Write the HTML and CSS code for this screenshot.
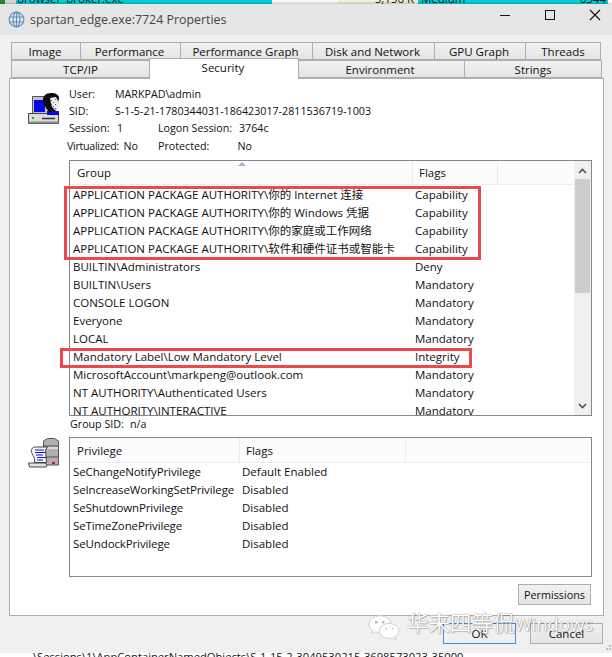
FILE: index.html
```html
<!DOCTYPE html>
<html lang="en">
<head>
<meta charset="utf-8">
<title>spartan_edge.exe:7724 Properties</title>
<link rel="stylesheet" href="styles.css">
</head>
<body>
<div class="screen">
  <div class="behind-top">
    <span class="bt-a"></span>
    <span class="bt-b"><span class="bt-name">browser_broker.exe</span></span>
    <span class="bt-c"></span>
    <span class="bt-d"><span>5,156 K</span></span>
    <span class="bt-e"><span>Medium</span><span>6544</span></span>
  </div>
  <div class="window">
    <div class="titlebar">
      <svg class="globe" width="17" height="17" viewBox="0 0 17 17" fill="none" stroke="#5b8fc4" stroke-width="1.1"><circle cx="8.5" cy="8.5" r="7.4"/><ellipse cx="8.5" cy="8.5" rx="3.4" ry="7.4"/><path d="M1.2 6h14.600M1.200 11h14.600M8.500 1v15"/></svg>
      <span class="title">spartan_edge.exe:7724 Properties</span>
      <span class="winbtns">
        <svg width="12" height="12" viewBox="0 0 12 12"><path d="M1 6.500h10" stroke="#111" stroke-width="1"/></svg>
        <svg width="12" height="12" viewBox="0 0 12 12"><rect x="1.500" y="1.500" width="9" height="9" fill="none" stroke="#111"/></svg>
        <svg width="12" height="12" viewBox="0 0 12 12"><path d="M1 1l10 10M11 1L1 11" stroke="#111" stroke-width="1.100"/></svg>
      </span>
    </div>
    <div class="tabs">
      <div class="tabrow first">
        <span class="tab w-image">Image</span>
        <span class="tab w-perf">Performance</span>
        <span class="tab w-graph">Performance Graph</span>
        <span class="tab w-disk">Disk and Network</span>
        <span class="tab w-gpu">GPU Graph</span>
        <span class="tab w-threads">Threads</span>
      </div>
      <div class="tabrow second">
        <span class="tab w-tcp">TCP/IP</span>
        <span class="tab active w-sec">Security</span>
        <span class="tab w-env">Environment</span>
        <span class="tab w-str">Strings</span>
      </div>
    </div>
    <div class="panel">
      <div class="info">
        <svg class="icon-user" width="32" height="32" viewBox="0 0 32 32">
          <path d="M4.500 3.500h18v17h-18z" fill="#c4c4c4" stroke="#555"/>
          <path d="M6 7h11v12H6z" fill="#0808e8"/>
          <path d="M.5 20.500h30v10H.5z" fill="#dcdcdc" stroke="#444"/>
          <path d="M.5 28.500h30v2H.5z" fill="#8a8a8a"/>
          <path d="M19 18h12v4H19z" fill="#0808e8"/>
          <path d="M4 24h2v2H4z" fill="#00c000"/>
          <path d="M14 25.500h13" stroke="#333" stroke-width="1.500"/>
          <path d="M15 9c-1-6 3-9 8-9 5 0 8 2 8 5l-2 11-3 3h-5l-3-4z" fill="#0c0c0c"/>
          <path d="M22 5l6-1 2 4 2 4-2 1v3l-3 1-3-3-1-4z" fill="#ececec"/>
          <path d="M23 7h1v1h-1zM25 9h1v1h-1zM23 11h1v1h-1zM27 6h1v1h-1zM27 11h1v1h-1zM25 13h1v1h-1zM27 15h1v1h-1z" fill="#666"/>
        </svg>
        <div class="facts">
          <div class="fact"><span class="k-user">User:</span><span>MARKPAD\admin</span></div>
          <div class="fact"><span class="k-user">SID:</span><span>S-1-5-21-1780344031-186423017-2811536719-1003</span></div>
          <div class="fact"><span class="k-sess">Session:</span><span class="v-sess">1</span><span class="k-logon">Logon Session:</span><span>3764c</span></div>
          <div class="fact"><span class="k-virt">Virtualized:</span><span class="v-virt">No</span><span class="k-prot">Protected:</span><span>No</span></div>
        </div>
      </div>
      <div class="listbox groups">
        <div class="listhead">
          <span class="hcell c-group">Group<i class="sort"></i></span>
          <span class="hcell c-flags">Flags</span>
          <span class="hcell c-rest"></span>
        </div>
        <div class="rows">
          <div class="row"><span class="c-group">APPLICATION PACKAGE AUTHORITY\你的 Internet 连接</span><span>Capability</span></div>
          <div class="row"><span class="c-group">APPLICATION PACKAGE AUTHORITY\你的 Windows 凭据</span><span>Capability</span></div>
          <div class="row"><span class="c-group">APPLICATION PACKAGE AUTHORITY\你的家庭或工作网络</span><span>Capability</span></div>
          <div class="row"><span class="c-group">APPLICATION PACKAGE AUTHORITY\软件和硬件证书或智能卡</span><span>Capability</span></div>
          <div class="row"><span class="c-group">BUILTIN\Administrators</span><span>Deny</span></div>
          <div class="row"><span class="c-group">BUILTIN\Users</span><span>Mandatory</span></div>
          <div class="row"><span class="c-group">CONSOLE LOGON</span><span>Mandatory</span></div>
          <div class="row"><span class="c-group">Everyone</span><span>Mandatory</span></div>
          <div class="row"><span class="c-group">LOCAL</span><span>Mandatory</span></div>
          <div class="row"><span class="c-group">Mandatory Label\Low Mandatory Level</span><span>Integrity</span></div>
          <div class="row"><span class="c-group">MicrosoftAccount\markpeng@outlook.com</span><span>Mandatory</span></div>
          <div class="row"><span class="c-group">NT AUTHORITY\Authenticated Users</span><span>Mandatory</span></div>
          <div class="row"><span class="c-group">NT AUTHORITY\INTERACTIVE</span><span>Mandatory</span></div>
        </div>
        <div class="scrollbar">
          <svg class="arrow" width="9" height="6" viewBox="0 0 9 6"><path d="M1 5l3.500-3.500L8 5" fill="none" stroke="#505050" stroke-width="1.600"/></svg>
          <div class="thumb"></div>
          <svg class="arrow down" width="9" height="6" viewBox="0 0 9 6"><path d="M1 1l3.500 3.500L8 1" fill="none" stroke="#505050" stroke-width="1.600"/></svg>
        </div>
      </div>
      <div class="groupsid"><span class="k-gsid">Group SID:</span><span>n/a</span></div>
      <div class="privs">
        <svg class="icon-priv" width="32" height="30" viewBox="0 0 32 30">
          <path d="M15.500 3l4-2.500h7l4 2.500v24h-15z" fill="#b0b0b0" stroke="#555"/>
          <path d="M16 8h14M16 19h14" stroke="#555"/>
          <path d="M16 9h14v2H16z" fill="#dedede"/>
          <path d="M24 24h3v2h-3z" fill="#e01010"/>
          <path d="M3.500 11.500c1-2 2-2.500 4-2.500h12l-2 3c0 4 1 8 1 12.500H6.500c1-4-1-6-2.500-9-.5-1.500-1-3-.5-4z" fill="#f6f6f6" stroke="#444"/>
          <path d="M7 12h9M7 14.500h10M8 17h7M9 19.500h9M9 22h6" stroke="#1010d8" stroke-width="1.200"/>
          <path d="M.5 25h17l1.500 2-1 2H1.500z" fill="#e2e2e2" stroke="#444"/>
        </svg>
        <div class="listbox privbox">
          <div class="listhead tall">
            <span class="hcell c-priv">Privilege</span>
            <span class="hcell c-pflags">Flags</span>
            <span class="hcell c-rest"></span>
          </div>
          <div class="rows">
            <div class="row"><span class="c-priv">SeChangeNotifyPrivilege</span><span>Default Enabled</span></div>
            <div class="row"><span class="c-priv">SeIncreaseWorkingSetPrivilege</span><span>Disabled</span></div>
            <div class="row"><span class="c-priv">SeShutdownPrivilege</span><span>Disabled</span></div>
            <div class="row"><span class="c-priv">SeTimeZonePrivilege</span><span>Disabled</span></div>
            <div class="row"><span class="c-priv">SeUndockPrivilege</span><span>Disabled</span></div>
          </div>
        </div>
      </div>
      <div class="permrow"><button class="btn perm" type="button">Permissions</button></div>
    </div>
    <div class="footer">
      <button class="btn ok" type="button">OK</button>
      <button class="btn cancel" type="button">Cancel</button>
    </div>
  </div>
  <div class="behind-bottom">\Sessions\1\AppContainerNamedObjects\S-1-15-2-3049530215-3698573023-35000</div>
  <div class="mark mark-a"></div>
  <div class="mark mark-b"></div>
  <svg class="grip" width="6" height="6" viewBox="0 0 6 6" fill="#b8b8b8"><path d="M3 0h2v2H3zM0 3h2v2H0zM3 3h2v2H3z"/></svg>
  <div class="watermark">
    <svg class="wm-icon" width="32" height="25" viewBox="0 0 32 25">
      <path d="M12 .8C5.800.8 1 4.700 1 9.300c0 2.600 1.500 4.900 3.800 6.300l-1 3.200 3.700-2c1.400.4 2.800.6 4.500.6 6.200 0 11-3.700 11-8.100C23 4.700 18.200.8 12 .8z" fill="#fff" stroke="#d0d0d0"/>
      <path d="M21 8.500c-5.300 0-9.800 3.300-9.800 7.500s4.500 7.500 9.800 7.500c1.300 0 2.500-.2 3.600-.6l3.200 1.700-.9-3c2.400-1.400 4-3.300 4-5.600 0-4.200-4.600-7.500-9.900-7.500z" fill="#fff" stroke="#d0d0d0"/>
      <path d="M7 6h2.500v2.500H7zM14 6h2.500v2.500H14zM17.500 13H19v1.500h-1.500zM24 13h1.500v1.500H24z" fill="#bdbdbd"/>
    </svg>
    <span class="wm-text">华来四等侃<span class="wm-latin">Windows</span></span>
  </div>
</div>
</body>
</html>
```

FILE: styles.css
```css
* { box-sizing: border-box; }
html, body { margin: 0; padding: 0; }
body { font-family: "Open Sans", "Noto Sans CJK SC", sans-serif; font-size: 11.5px; color: #111; background: #fff; }
.screen { position: relative; width: 612px; height: 657px; overflow: hidden; display: flex; flex-direction: column; }

.behind-top { height: 4px; display: flex; line-height: 12px; overflow: hidden; flex: none; background: #fff; }
.behind-top > span > span { display: block; margin-top: -7px; }
.bt-a { width: 16px; background: #d8d8d8; border-left: 5px solid #2a8a2a; }
.bt-b { width: 256px; background: #00d2d8; }
.bt-name { padding-left: 1px; }
.bt-c { width: 66px; background: #fafafa; }
.bt-d { width: 80px; background: #f4efdc; text-align: right; padding-right: 4px; }
.bt-e { width: 190px; background: #00d2d8; display: flex; justify-content: space-between; padding: 0 2px 0 3px; }

.window { flex: 1; min-height: 0; background: #f0f0f0; display: flex; flex-direction: column; box-shadow: 0 0 3px rgba(0,0,0,.4); }
.titlebar { height: 31px; background: #e6e6e6; display: flex; align-items: center; padding: 0 11px 0 8px; flex: none; }
.globe { margin-right: 5px; }
.title { font-size: 12.400px; color: #444; flex: 1; }
.winbtns { display: flex; gap: 33px; margin-top: -9px; }

.tabs { padding: 7px 9px 0 11px; flex: none; height: 44px; }
.tabrow { display: flex; height: 18px; }
.tab { display: flex; align-items: center; justify-content: center; height: 18px; border: 1px solid #adadad; background: linear-gradient(#f2f2f2, #e4e4e4); white-space: nowrap; margin-left: -1px; }
.tab:first-child { margin-left: 0; }
.first .tab { padding-right: 2px; }
.first .w-threads { padding-right: 0; }
.tab.active { background: #fff; height: 21px; margin-top: -2px; border-bottom: 0; position: relative; z-index: 2; align-items: flex-start; padding-top: 1px; }
.w-image { width: 70px; }
.w-perf { width: 101px; }
.w-graph { width: 133px; }
.w-disk { width: 123px; }
.w-gpu { width: 92px; }
.w-threads { width: 76px; }
.w-tcp { width: 139px; }
.w-sec { width: 150px; padding-right: 2px; }
.w-env { width: 167px; padding-right: 3px; }
.w-str { width: 138px; }

.panel { margin: -1px 9px 0; height: 538px; width: 595px; background: #fff; border: 1px solid #adadad; padding: 0 0 0 59px; display: flex; flex-direction: column; flex: none; position: relative; z-index: 1; }
.info { position: relative; height: 81px; flex: none; padding-top: 6px; }
.icon-user { position: absolute; left: -41px; top: 14px; }
.facts { font-size: 10.700px; }
.fact { display: flex; height: 17.300px; align-items: center; }
.k-user { width: 46px; }
.k-sess { width: 48px; }
.v-sess { width: 41px; }
.k-logon { width: 81px; }
.k-virt { width: 56.500px; margin-left: -2px; letter-spacing: -.3px; }
.v-virt { width: 34.500px; }
.k-prot { width: 79.500px; }

.listbox { position: relative; border: 1px solid #828790; width: 523px; background: #fff; }
.groups { height: 256px; overflow: hidden; flex: none; }
.listhead { display: flex; height: 24px; border-bottom: 1px solid #e5eef8; background: #fcfcfd; }
.listhead.tall { height: 25px; margin-bottom: -1px; }
.hcell { display: flex; align-items: center; padding-left: 7px; border-right: 1px solid #e5eef8; position: relative; }
.groups .hcell.c-rest { width: 78px; }
.privbox .hcell.c-rest { flex: 1; border-right: 0; }
.sort { position: absolute; left: 168px; top: 1px; width: 0; height: 0; border: 4px solid transparent; border-top: 0; border-bottom: 4px solid #9bb8d0; }
.rows { display: flex; flex-direction: column; }
.row { display: flex; height: 18px; align-items: center; white-space: nowrap; padding-left: 3px; }
.row .c-group { width: 342px; }
.hcell.c-group { width: 343px; }
.hcell.c-flags { width: 85px; padding-left: 6px; }
.hcell.c-priv { width: 170px; }
.hcell.c-pflags { width: 166px; padding-left: 6px; }
.row .c-priv { width: 169px; letter-spacing: -.12px; }

.scrollbar { position: absolute; top: 0; right: 0; bottom: 0; width: 17px; background: #f0f0f0; display: flex; flex-direction: column; align-items: center; }
.arrow { margin: 7px 0 5px; flex: none; }
.thumb { width: 15px; height: 114px; background: #cdcdcd; flex: none; }
.arrow.down { margin: auto 0 6px; }

.groupsid { display: flex; height: 21px; align-items: center; padding-bottom: 5px; flex: none; font-size: 10.700px; padding-left: 1px; }
.k-gsid { width: 60px; }

.privs { position: relative; flex: none; }
.privbox { height: 140px; }
.icon-priv { position: absolute; left: -41px; top: 1px; }

.permrow { display: flex; padding: 7px 12px 0 0; justify-content: flex-end; }
.btn { font: inherit; color: #111; border: 1px solid #adadad; background: linear-gradient(#f2f2f2, #e4e4e4); padding: 0; }
.perm { width: 73px; height: 21px; font-size: 10.800px; }
.footer { display: flex; padding: 7px 9px 0 0; justify-content: flex-end; gap: 14px; height: 36px; flex: none; }
.ok, .cancel { width: 73px; height: 21px; }
.ok { border-color: #3a8fe6; background: #f0f0f0; }

.behind-bottom { height: 4px; background: #fff; font-size: 11.200px; line-height: 8px; overflow: hidden; padding-left: 33px; flex: none; white-space: nowrap; }

.mark { position: absolute; border: 3px solid #ec4a48; pointer-events: none; z-index: 3; }
.mark-a { left: 64px; top: 186px; width: 417px; height: 74px; }
.mark-b { left: 60px; top: 348px; width: 412px; height: 20px; }

.grip { position: absolute; right: 0; top: 645px; z-index: 3; }

.watermark { position: absolute; z-index: 4; left: 368px; top: 611px; display: flex; align-items: flex-start; gap: 7px; color: #fff; white-space: nowrap; pointer-events: none; }
.wm-icon { margin-top: 4px; flex: none; }
.wm-text { font-size: 21.500px; line-height: 24px; text-shadow: 0 0 1px rgba(0,0,0,.55), 1px 1px 1px rgba(0,0,0,.2); }
.wm-latin { font-size: 18.500px; }
```
